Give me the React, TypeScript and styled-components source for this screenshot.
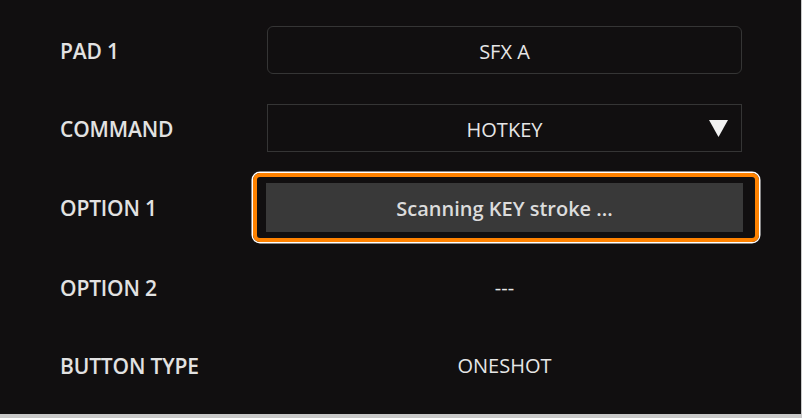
import React, {FC} from "react"
import styled, {createGlobalStyle} from "styled-components"

const GlobalStyle = createGlobalStyle`
  html, body {
    margin: 0;
    padding: 0;
    background: #c9c9c9;
  }
  body {
    font-family: "Open Sans", "Noto Sans", sans-serif;
  }
`;

const Panel = styled.div`
  width: 801px;
  height: 414px;
  background: #110f10;
  box-sizing: border-box;
  padding-top: 11px;
  display: grid;
  grid-template-columns: 267px 475px;
  grid-template-rows: 78px 78px 80px 79px 77px;
  align-items: center;
`;

const Label = styled.div`
  padding-left: 60px;
  padding-top: 2px;
  color: #e2e2e2;
  font-size: 21px;
  font-weight: 600;
  letter-spacing: -0.15px;
`;

const Field = styled.div<{rounded?: boolean}>`
  position: relative;
  height: 48px;
  box-sizing: border-box;
  padding-top: 2px;
  border: 1px solid #353535;
  border-radius: ${p => p.rounded ? '6px' : '0'};
  display: flex;
  align-items: center;
  justify-content: center;
  color: #e6e6e6;
  font-size: 20px;
`;

const Caret = styled.svg`
  position: absolute;
  right: 13px;
  top: 15px;
`;

const HighlightFrame = styled.div`
  margin: 0 -17px 0 -14px;
  padding: 6px 12px 6px 9px;
  border: 4px solid #ff8200;
  border-radius: 7px;
  box-shadow: 0 0 0 1.5px #ffffff;
`;

const ScanBox = styled.div`
  height: 49px;
  padding-top: 2px;
  box-sizing: border-box;
  background: #393939;
  display: flex;
  align-items: center;
  justify-content: center;
  color: #dcdcdc;
  font-size: 20px;
  font-weight: 600;
`;

const Value = styled.div`
  text-align: center;
  padding-top: 2px;
  color: #e6e6e6;
  font-size: 20px;
`;

const App: FC = () => {
  return (
    <>
      <GlobalStyle/>
      <Panel>
        <Label>PAD 1</Label>
        <Field rounded>SFX A</Field>

        <Label>COMMAND</Label>
        <Field>
          HOTKEY
          <Caret width="19" height="17" viewBox="0 0 19 17">
            <path d="M0 0 H19 L9.5 17 Z" fill="#f2f2f2"/>
          </Caret>
        </Field>

        <Label>OPTION 1</Label>
        <HighlightFrame>
          <ScanBox>Scanning KEY stroke ...</ScanBox>
        </HighlightFrame>

        <Label>OPTION 2</Label>
        <Value>---</Value>

        <Label>BUTTON TYPE</Label>
        <Value>ONESHOT</Value>
      </Panel>
    </>
  );
}

export default App;
